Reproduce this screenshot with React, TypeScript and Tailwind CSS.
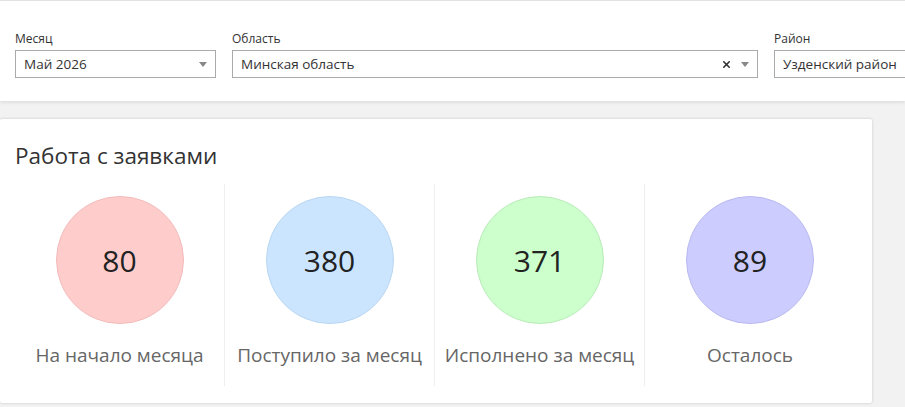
import { X } from "lucide-react";

type Stat = {
  value: number;
  label: string;
  circle: string; // классы фона и обводки
};

const stats: Stat[] = [
  { value: 80, label: "На начало месяца", circle: "bg-[#ffcccc] border-[#f2bcbc]" },
  { value: 380, label: "Поступило за месяц", circle: "bg-[#cce5ff] border-[#b9d6f2]" },
  { value: 371, label: "Исполнено за месяц", circle: "bg-[#ccffcc] border-[#b9ecb9]" },
  { value: 89, label: "Осталось", circle: "bg-[#ccccff] border-[#babaf0]" },
];

function Caret() {
  return (
    <span className="ml-[6px] w-0 h-0 border-l-[4px] border-r-[4px] border-t-[5px] border-l-transparent border-r-transparent border-t-[#888]" />
  );
}

function Select({
  label,
  value,
  width,
  clearable,
}: {
  label: string;
  value: string;
  width: string;
  clearable?: boolean;
}) {
  return (
    <div className={`flex flex-col shrink-0 ${width}`}>
      <span className="text-[12px] leading-[15px] text-[#333] mb-[4px]">{label}</span>
      <div className="h-[28px] border border-[#aaa] bg-white flex items-center pl-[8px] pr-[8px]">
        <span className="flex-1 text-[13.5px] text-[#333] whitespace-nowrap overflow-hidden">{value}</span>
        {clearable && <X size={11} strokeWidth={3.5} className="text-[#333] mr-[3px]" />}
        <Caret />
      </div>
    </div>
  );
}

export default function App() {
  return (
    <div
      className="w-[905px] h-[407px] overflow-hidden bg-[#f2f2f2]"
      style={{ fontFamily: '"Open Sans", "Noto Sans", sans-serif' }}
    >
      {/* Фильтры */}
      <div className="h-[101px] bg-white border-t border-[#e2e2e2] shadow-[0_2px_3px_rgba(0,0,0,0.08)] flex gap-[16px] pl-[15px] pt-[30px] overflow-hidden">
        <Select label="Месяц" value="Май 2026" width="w-[201px]" />
        <Select label="Область" value="Минская область" width="w-[526px]" clearable />
        <Select label="Район" value="Узденский район" width="w-[200px]" />
      </div>

      {/* Карточка */}
      <div className="mt-[18px] w-[872px] h-[284px] bg-white rounded-[2px] shadow-[0_0_3px_rgba(0,0,0,0.18)] px-[15px]">
        <h2 className="pt-[23px] text-[22.5px] leading-[28px] text-[#333]">Работа с заявками</h2>
        <div className="mt-[14px] flex">
          {stats.map((s, i) => (
            <div
              key={s.label}
              className={`w-[210px] h-[202px] flex flex-col items-center pt-[12px] ${
                i < stats.length - 1 ? "border-r border-[#eeeeee]" : ""
              }`}
            >
              <div
                className={`w-[128px] h-[128px] rounded-full border flex items-center justify-center ${s.circle}`}
              >
                <span className="text-[30px] text-[#222]">{s.value}</span>
              </div>
              <span className="mt-[17px] text-[19px] text-[#666] whitespace-nowrap">{s.label}</span>
            </div>
          ))}
        </div>
      </div>
    </div>
  );
}
